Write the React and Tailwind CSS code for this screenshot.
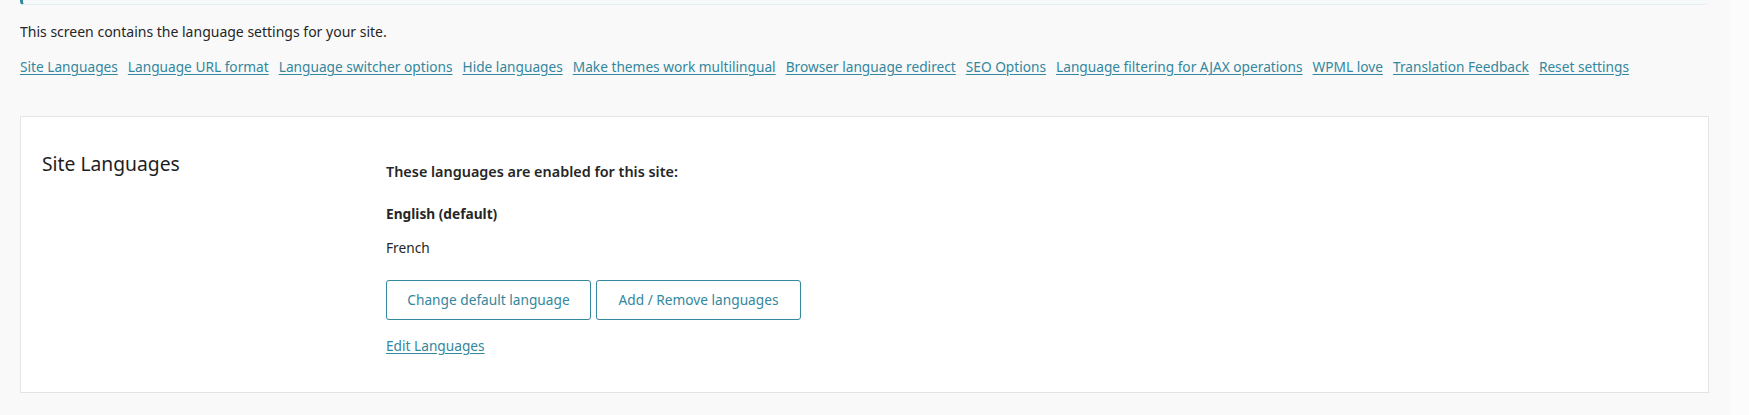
import React from "react";

const sections = [
  "Site Languages",
  "Language URL format",
  "Language switcher options",
  "Hide languages",
  "Make themes work multilingual",
  "Browser language redirect",
  "SEO Options",
  "Language filtering for AJAX operations",
  "WPML love",
  "Translation Feedback",
  "Reset settings",
];

const LanguageSettings = () => {
  return (
    <div className="flex h-[415px] w-full overflow-hidden bg-[#f9f9f9] font-['Noto_Sans',sans-serif] text-[13.7px] text-[#262626]">
      <div className="w-[1730px] shrink-0 px-[20px]">
        {/* tail of the notice box above */}
        <div className="h-[5px] w-[1688px] rounded-b-[4px] border-b border-l-[3px] border-[#e5eef1] border-l-[#33879e] bg-[#f5f9fa]" />

        <p className="mt-[17px] text-[14px] leading-[20px]">This screen contains the language settings for your site.</p>

        {/* Section anchors */}
        <nav className="mt-[15px] flex gap-[10px] leading-[20px]">
          {sections.map((s) => (
            <a key={s} href="#" className="text-[#33879e] underline underline-offset-[2px]">
              {s}
            </a>
          ))}
        </nav>

        {/* Site Languages card */}
        <section className="mt-[39px] flex h-[277px] w-[1689px] border border-[#e4e4e4] bg-white pl-[21px]">
          <h3 className="w-[344px] shrink-0 pt-[34px] text-[19.3px] leading-[26px] text-[#1e1e1e]">Site Languages</h3>

          <div className="pt-[45px] leading-[20px]">
            <p className="text-[14.4px] font-semibold">These languages are enabled for this site:</p>
            <p className="mt-[22px] font-bold">English (default)</p>
            <p className="mt-[14px]">French</p>

            <div className="mt-[22px] flex gap-[5px]">
              <button className="h-[40px] w-[205px] rounded-[3px] border border-[#33879e] bg-white text-[#33879e]">
                Change default language
              </button>
              <button className="h-[40px] w-[205px] rounded-[3px] border border-[#33879e] bg-white text-[#33879e]">
                Add / Remove languages
              </button>
            </div>

            <a href="#" className="mt-[16px] block w-fit text-[#33879e] underline underline-offset-[2px]">
              Edit Languages
            </a>
          </div>
        </section>
      </div>
      <div className="flex-1 bg-[#fcfcfc]" />
    </div>
  );
};

export default function App() {
  return <LanguageSettings />;
}
